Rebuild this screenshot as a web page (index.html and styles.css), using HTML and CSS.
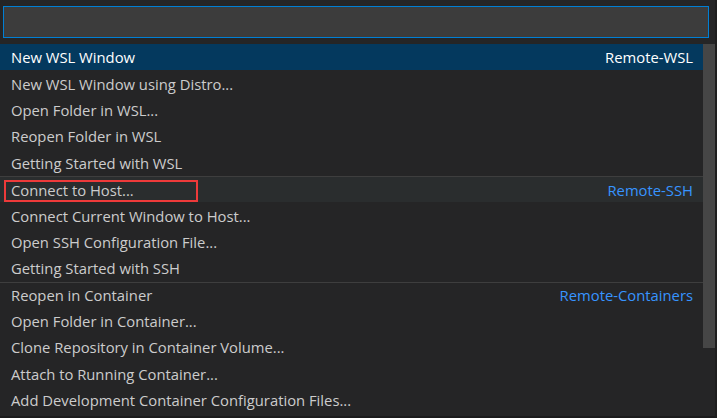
FILE: index.html
```html
<!DOCTYPE html>
<html>
<head>
<meta charset="utf-8">
<link rel="stylesheet" href="styles.css">
</head>
<body>
<div class="screen">
  <div class="quick-pick">
    <div class="input-wrap"><div class="input"></div></div>
    <div class="list">
      <div class="row selected"><span class="label">New WSL Window</span><span class="tag">Remote-WSL</span></div>
      <div class="row"><span class="label">New WSL Window using Distro...</span></div>
      <div class="row"><span class="label">Open Folder in WSL...</span></div>
      <div class="row"><span class="label">Reopen Folder in WSL</span></div>
      <div class="row"><span class="label">Getting Started with WSL</span></div>
      <div class="row sep hover"><span class="label">Connect to Host...</span><span class="tag">Remote-SSH</span><span class="mark"></span></div>
      <div class="row"><span class="label">Connect Current Window to Host...</span></div>
      <div class="row"><span class="label">Open SSH Configuration File...</span></div>
      <div class="row"><span class="label">Getting Started with SSH</span></div>
      <div class="row sep"><span class="label">Reopen in Container</span><span class="tag">Remote-Containers</span></div>
      <div class="row"><span class="label">Open Folder in Container...</span></div>
      <div class="row"><span class="label">Clone Repository in Container Volume...</span></div>
      <div class="row"><span class="label">Attach to Running Container...</span></div>
      <div class="row"><span class="label">Add Development Container Configuration Files...</span></div>
    </div>
    <div class="scroll-slider"></div>
  </div>
  <div class="edge"></div>
</div>
</body>
</html>
```

FILE: styles.css
```css
html, body {
  margin: 0;
  padding: 0;
  background: #1b1b1c;
  overflow: hidden;
}
.screen {
  display: flex;
  width: 717px;
  height: 418px;
}
.quick-pick {
  position: relative;
  width: 715px;
  height: 416px;
  background: #252526;
  font-family: "Open Sans", "Noto Sans", sans-serif;
  font-size: 14.8px;
  color: #cccccc;
}
.edge {
  width: 2px;
  background: #1e1e1e;
}
.input-wrap {
  padding: 6px 6px 0 3px;
}
.input {
  height: 30px;
  background: #3c3c3c;
  border: 1px solid #007fd4;
}
.list {
  margin-top: 6px;
  width: 703px;
}
.row {
  height: 26.4px;
  box-sizing: border-box;
  display: flex;
  align-items: center;
  justify-content: space-between;
  padding: 0 10px 0 11px;
  position: relative;
}
.row.sep {
  border-top: 1px solid #3e3e3e;
}
.row.selected {
  background: #04395e;
  color: #ffffff;
}
.row.hover {
  background: #2a2d2e;
}
.tag {
  color: #3794ff;
}
.row.selected .tag {
  color: #ffffff;
}
.mark {
  position: absolute;
  left: 4px;
  top: 3px;
  width: 190px;
  height: 18px;
  border: 2px solid #ee3a3a;
}
.scroll-slider {
  position: absolute;
  left: 703px;
  top: 44px;
  width: 12px;
  height: 304px;
  background: rgba(121, 121, 121, 0.4);
}
```
